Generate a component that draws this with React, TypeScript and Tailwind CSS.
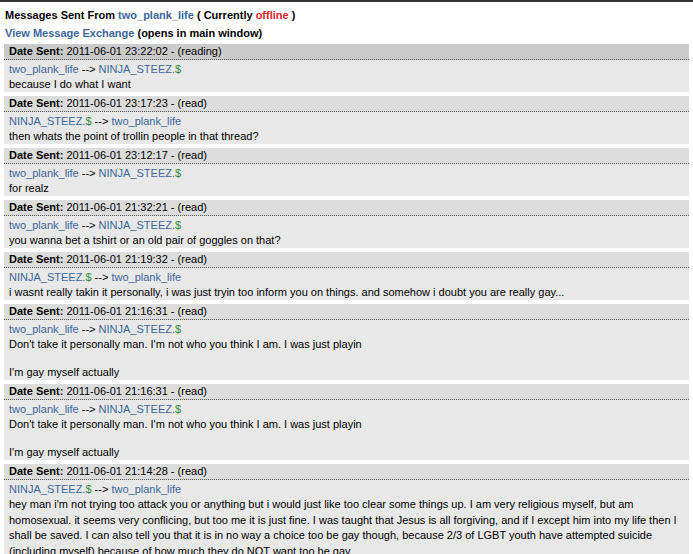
import React from "react";

type Msg = {
  date: string;
  status: string;
  fromMe: boolean; // two_plank_life -> NINJA
  lines: (string | null)[];
  active?: boolean;
};

const msgs: Msg[] = [
  { date: "2011-06-01 23:22:02", status: "(reading)", fromMe: true, lines: ["because I do what I want"], active: true },
  { date: "2011-06-01 23:17:23", status: "(read)", fromMe: false, lines: ["then whats the point of trollin people in that thread?"] },
  { date: "2011-06-01 23:12:17", status: "(read)", fromMe: true, lines: ["for realz"] },
  { date: "2011-06-01 21:32:21", status: "(read)", fromMe: true, lines: ["you wanna bet a tshirt or an old pair of goggles on that?"] },
  { date: "2011-06-01 21:19:32", status: "(read)", fromMe: false, lines: ["i wasnt really takin it personally, i was just tryin too inform you on things. and somehow i doubt you are really gay..."] },
  { date: "2011-06-01 21:16:31", status: "(read)", fromMe: true, lines: ["Don't take it personally man. I'm not who you think I am. I was just playin", null, "I'm gay myself actually"] },
  { date: "2011-06-01 21:16:31", status: "(read)", fromMe: true, lines: ["Don't take it personally man. I'm not who you think I am. I was just playin", null, "I'm gay myself actually"] },
  {
    date: "2011-06-01 21:14:28",
    status: "(read)",
    fromMe: false,
    lines: [
      "hey man i'm not trying too attack you or anything but i would just like too clear some things up. I am very religious myself, but am homosexual. it seems very conflicing, but too me it is just fine. I was taught that Jesus is all forgiving, and if I except him into my life then I shall be saved. I can also tell you that it is in no way a choice too be gay though, because 2/3 of LGBT youth have attempted suicide (including myself) because of how much they do NOT want too be gay.",
    ],
  },
];

function Ninja() {
  return (
    <span>
      <span className="text-[#3b679b]">NINJA_STEEZ.</span>
      <span className="text-[#2f8a3a]">$</span>
    </span>
  );
}

function Plank() {
  return <span className="text-[#3b679b]">two_plank_life</span>;
}

export default function App() {
  return (
    <div
      className="w-[693px] h-[554px] overflow-hidden bg-white text-black text-[11px]"
      style={{ fontFamily: '"Liberation Sans", Arial, Helvetica, sans-serif' }}
    >
      <div className="h-[2px] bg-[#333333]" />
      <div className="pl-[5px] pt-[6px] leading-[15px] font-bold">
        Messages Sent From <span className="text-[#3b679b]">two_plank_life</span> ( Currently{" "}
        <span className="text-[#e0262b]">offline</span> )
      </div>
      <div className="pl-[5px] pt-[3px] leading-[15px] font-bold">
        <span className="text-[#3b679b]">View Message Exchange</span> (opens in main window)
      </div>
      <div className="pl-[4px] pt-[3px] w-[689px]">
        {msgs.map((m, i) => (
          <div key={i} className="mb-[4px]">
            <div
              className={
                "h-[15px] leading-[15px] pl-[5px] border-b border-dotted border-[#555555] box-content " +
                (m.active ? "bg-[#cbcbcb]" : "bg-[#dcdcdc]")
              }
            >
              <span className="font-bold">Date Sent:</span> {m.date} - {m.status}
            </div>
            <div className="bg-[#e8e8e8] pl-[5px] pr-[4px] pt-[2px] leading-[15px]">
              <div>
                {m.fromMe ? (
                  <>
                    <Plank /> --&gt; <Ninja />
                  </>
                ) : (
                  <>
                    <Ninja /> --&gt; <Plank />
                  </>
                )}
              </div>
              {m.lines.map((l, j) =>
                l === null ? <div key={j} className="h-[13px]" /> : <div key={j} className={i === 7 ? "leading-[15.7px]" : ""}>{l}</div>
              )}
            </div>
          </div>
        ))}
      </div>
    </div>
  );
}
